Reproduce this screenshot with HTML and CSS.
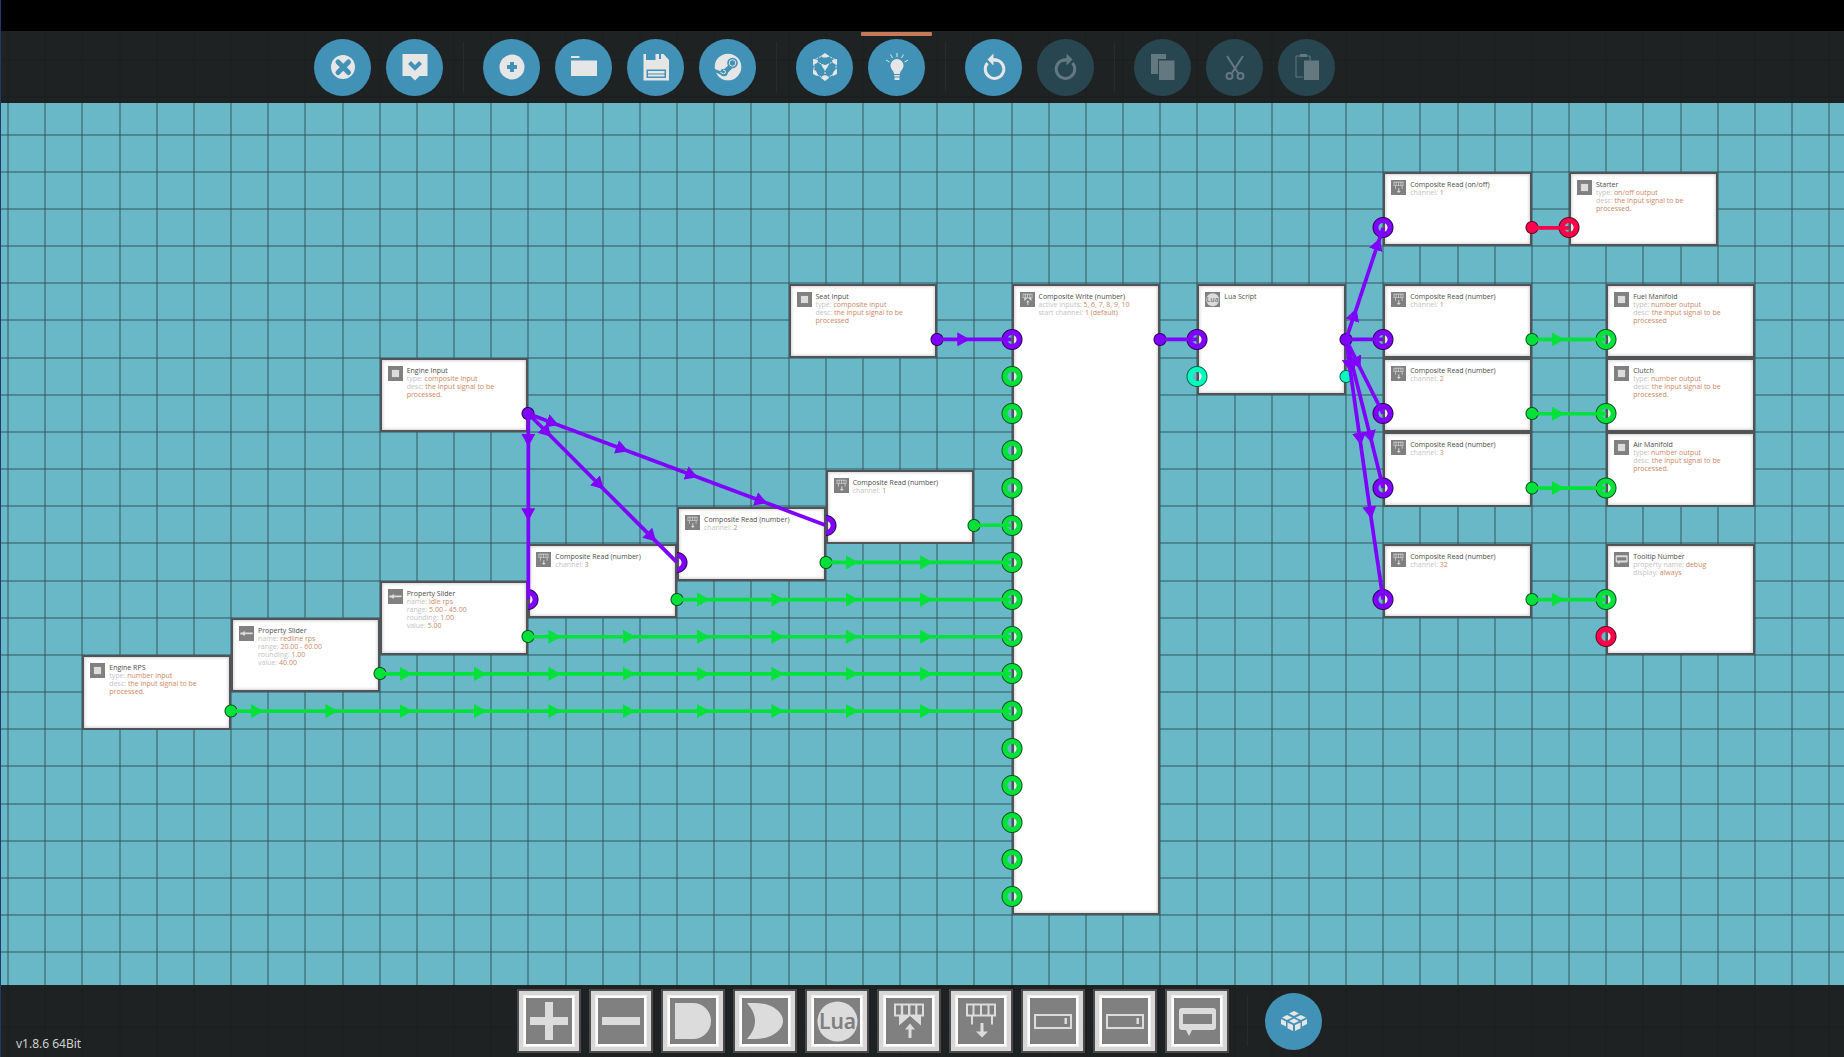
FILE: index.html
```html
<!DOCTYPE html>
<html lang="en">
<head>
<meta charset="utf-8">
<meta name="viewport" content="width=device-width, initial-scale=1">
<title>Microcontroller Editor</title>
<link rel="stylesheet" href="styles.css">
</head>
<body>
<svg class="defs" aria-hidden="true">
  <symbol id="i-add" viewBox="0 0 46 46"><path d="M19 4h8v15h15v8H27v15h-8V27H4v-8h15z"/></symbol>
  <symbol id="i-sub" viewBox="0 0 46 46"><path d="M4 19h38v8H4z"/></symbol>
  <symbol id="i-and" viewBox="0 0 46 46"><path d="M5 5h18a18 18 0 0 1 0 36H5z"/></symbol>
  <symbol id="i-or" viewBox="0 0 46 46"><path d="M5 5h8c17 0 28 9 28 18s-11 18-28 18H5c5-6 8-11 8-18S10 11 5 5z"/></symbol>
  <symbol id="i-lua" viewBox="0 0 46 46"><circle cx="23.500" cy="23.500" r="20"/><text x="23.500" y="31" text-anchor="middle" class="lua-text">Lua</text></symbol>
  <symbol id="i-write" viewBox="0 0 46 46"><path fill-rule="evenodd" d="M8 5.500h30V18.500h-3v9l-11-9.500-11 9.500v-9H8zM10 7.500v9h4.800v-9zM17.200 7.500v9H22v-9zM24.400 7.500v9h4.800v-9zM31.400 7.500v9H36v-9z"/><path d="M24 25.500l5 6h-3.500v8.500h-3v-8.500H19z"/></symbol>
  <symbol id="i-read" viewBox="0 0 46 46"><path fill-rule="evenodd" d="M8 5.500h30V18.500h-3v8h-2v-8H15v8h-2v-8H8zM10 7.500v9h4.500v-9zM16.500 7.500v9H22v-9zM24 7.500v9h5.500v-9zM31.500 7.500v9H36v-9z"/><path d="M24 39.500l-6-6h4.500V25h3v8.500h4.500z"/></symbol>
  <symbol id="i-dial" viewBox="0 0 46 46"><path fill-rule="evenodd" d="M4 16h38v15H4zM6 18v11h34V18z"/><rect x="34.500" y="20" width="2.500" height="6"/></symbol>
  <symbol id="i-tip" viewBox="0 0 46 46"><path fill-rule="evenodd" d="M8 10h31q3 0 3 3v16q0 3-3 3H18l-3 6-3-6H8q-3 0-3-3V13q0-3 3-3zM9 16v10h29V16z"/></symbol>
  <symbol id="i-io" viewBox="0 0 46 46"><path d="M12 12h22v22H12z"/></symbol>
  <symbol id="i-slider" viewBox="0 0 46 46"><path d="M4 20h6l8-5v5h24v5H18v6l-8-5H4z"/></symbol>
</svg>
<div class="app">
  <div class="letterbox"></div>

  <header class="toolbar">
    <button class="round" aria-label="Close"><svg viewBox="0 0 30 30"><circle cx="15" cy="15" r="12"/><path class="cut w5" d="M10 10l10.500 10.500M20.500 10L10 20.500"/></svg></button>
    <button class="round" aria-label="Minimise"><svg viewBox="0 0 30 30"><path d="M2.500 2h25v22h-8L15 28.500 10.500 24h-8z"/><path class="cut w4" d="M9.500 10.500l5.500 5.500 5.500-5.500"/></svg></button>
    <span class="sep"></span>
    <button class="round" aria-label="New"><svg viewBox="0 0 30 30"><circle cx="15" cy="15" r="12.500"/><path class="cut w4" d="M15 10v10M10 15h10"/></svg></button>
    <button class="round" aria-label="Open"><svg viewBox="0 0 30 30"><path d="M2 4h8.500v2H2zM2 8.500h26V24H2z"/></svg></button>
    <button class="round" aria-label="Save"><svg viewBox="0 0 30 30"><path fill-rule="evenodd" d="M2.500 2H5v6h9.500V2H18v5h2V2h2.500L28 8v20.500H2.500zM5.500 17.500V26h19.500v-8.500zM7 19h16.500v2.500H7zM7 22.500h16.500v2H7z"/></svg></button>
    <button class="round" aria-label="Workshop"><svg viewBox="0 0 30 30"><circle cx="15" cy="15" r="13.300"/><path class="cut w3" d="M0 18l9 3.500"/><path class="cut w5" d="M11 21l9-9"/><circle class="hole" cx="19.500" cy="11" r="5.300"/><circle cx="19.500" cy="11" r="3.300" class="ring"/><circle cx="11" cy="20.500" r="3.800" class="hole"/><path class="thin" d="M7.500 20.500l3 1.200q2 .300 2-1.700t-2.500-2"/></svg></button>
    <span class="sep"></span>
    <button class="round" aria-label="Toggle 3D view"><svg viewBox="0 0 30 30"><path class="thin dash" d="M15 2.500L26 8v13l-11 6L4 21V8zM4 8l11 6 11-6M15 14v13"/><path d="M15 1l4 3-2 1.500h-4L11 4zM15 29l-4-3 2-2.500h4l2 2.500zM3 7l5 1-1 3-4 2zM27 7l-5 1 1 3 4 2zM3 22v-5l3 2 2 4-1 1zM27 22v-5l-3 2-2 4 1 1zM11 12l4 1 4-1-2 4-2 2-2-2z"/></svg></button>
    <span class="marked"><button class="round" aria-label="Hints"><svg viewBox="0 0 30 30"><path d="M15 7a6.500 6.500 0 0 1 6.500 6.500c0 4-3.500 5-3.500 8.500h-6c0-3.500-3.500-4.500-3.500-8.500A6.500 6.500 0 0 1 15 7zM12.300 23h5.400v1.500h-5.400zM12.500 25.500h5V28h-5z"/><path class="thin" d="M15 1v4M8.500 2.500l2 3.500M21.500 2.500l-2 3.500M4 8l3.500 2M26 8l-3.500 2"/></svg></button></span>
    <span class="sep"></span>
    <button class="round" aria-label="Undo"><svg viewBox="0 0 30 30"><path class="arc" d="M17.500 8A9.300 9.300 0 1 1 8.500 11"/><path d="M14.500 1.500v4.500l3.500 .500v3.500l-3.500-.500v4L8.500 7.500z"/></svg></button>
    <button class="round" aria-label="Redo" disabled><svg viewBox="0 0 30 30"><path class="arc" d="M12.500 8A9.300 9.300 0 1 0 21.500 11"/><path d="M15.500 1.500v4.500l-3.500 .500v3.500l3.500-.500v4l6-6z"/></svg></button>
    <span class="sep"></span>
    <button class="round" aria-label="Copy" disabled><svg viewBox="0 0 30 30"><path d="M3 2h15v5h-8v15H3zM11 8.500h15.500V28H11z"/></svg></button>
    <button class="round" aria-label="Cut" disabled><svg viewBox="0 0 30 30"><path class="blade" d="M7 4l11 17M23 4L12 21"/><circle class="loop" cx="9.500" cy="24" r="3"/><circle class="loop" cx="20.500" cy="24" r="3"/></svg></button>
    <button class="round" aria-label="Paste" disabled><svg viewBox="0 0 30 30"><path class="thin" d="M10 4H4v21h7M15 4h3v5"/><path d="M8 2h7v3H8zM12 8.500h15V28H12z"/></svg></button>
  </header>

  <main class="canvas">
    <div class="board">
      <article class="node" style="--x:22;--y:9"><svg class="icon"><use href="#i-read"/></svg><div class="info"><h2>Composite Read (number)</h2><p>channel: <b>1</b></p></div><div class="in"><i class="port violet"></i></div><div class="out"><i class="pin green"></i></div></article>
      <article class="node" style="--x:18;--y:10"><svg class="icon"><use href="#i-read"/></svg><div class="info"><h2>Composite Read (number)</h2><p>channel: <b>2</b></p></div><div class="in"><i class="port violet"></i></div><div class="out"><i class="pin green"></i></div></article>
      <article class="node" style="--x:14;--y:11"><svg class="icon"><use href="#i-read"/></svg><div class="info"><h2>Composite Read (number)</h2><p>channel: <b>3</b></p></div><div class="in"><i class="port violet"></i></div><div class="out"><i class="pin green"></i></div></article>
      <article class="node" style="--x:10;--y:12"><svg class="icon"><use href="#i-slider"/></svg><div class="info"><h2>Property Slider</h2><p>name: <b>idle rps</b></p><p>range: <b>5.00 - 45.00</b></p><p>rounding: <b>1.00</b></p><p>value: <b>5.00</b></p></div><div class="out"><i class="pin green"></i></div></article>
      <article class="node" style="--x:6;--y:13"><svg class="icon"><use href="#i-slider"/></svg><div class="info"><h2>Property Slider</h2><p>name: <b>redline rps</b></p><p>range: <b>20.00 - 60.00</b></p><p>rounding: <b>1.00</b></p><p>value: <b>40.00</b></p></div><div class="out"><i class="pin green"></i></div></article>
      <article class="node" style="--x:2;--y:14"><svg class="icon"><use href="#i-io"/></svg><div class="info"><h2>Engine RPS</h2><p>type: <b>number input</b></p><p>desc: <b>the input signal to be processed.</b></p></div><div class="out"><i class="pin green"></i></div></article>
      <article class="node" style="--x:10;--y:6"><svg class="icon"><use href="#i-io"/></svg><div class="info"><h2>Engine Input</h2><p>type: <b>composite input</b></p><p>desc: <b>the input signal to be processed.</b></p></div><div class="out"><i class="pin violet"></i></div></article>
      <article class="node" style="--x:21;--y:4"><svg class="icon"><use href="#i-io"/></svg><div class="info"><h2>Seat Input</h2><p>type: <b>composite input</b></p><p>desc: <b>the input signal to be processed</b></p></div><div class="out"><i class="pin violet"></i></div></article>
      <article class="node" style="--x:27;--y:4;--h:17"><svg class="icon"><use href="#i-write"/></svg><div class="info"><h2>Composite Write (number)</h2><p>active inputs: <b>5, 6, 7, 8, 9, 10</b></p><p>start channel: <b>1 (default)</b></p></div>
        <div class="in"><i class="port violet"></i><i class="port green"></i><i class="port green"></i><i class="port green"></i><i class="port green"></i><i class="port green"></i><i class="port green"></i><i class="port green"></i><i class="port green"></i><i class="port green"></i><i class="port green"></i><i class="port green"></i><i class="port green"></i><i class="port green"></i><i class="port green"></i><i class="port green"></i></div>
        <div class="out"><i class="pin violet"></i></div></article>
      <article class="node" style="--x:32;--y:4;--h:3"><svg class="icon"><use href="#i-lua"/></svg><div class="info"><h2>Lua Script</h2></div><div class="in"><i class="port violet"></i><i class="port teal"></i></div><div class="out"><i class="pin violet"></i><i class="pin teal"></i></div></article>
      <article class="node" style="--x:37;--y:1"><svg class="icon"><use href="#i-read"/></svg><div class="info"><h2>Composite Read (on/off)</h2><p>channel: <b>1</b></p></div><div class="in"><i class="port violet"></i></div><div class="out"><i class="pin red"></i></div></article>
      <article class="node" style="--x:37;--y:4"><svg class="icon"><use href="#i-read"/></svg><div class="info"><h2>Composite Read (number)</h2><p>channel: <b>1</b></p></div><div class="in"><i class="port violet"></i></div><div class="out"><i class="pin green"></i></div></article>
      <article class="node" style="--x:37;--y:6"><svg class="icon"><use href="#i-read"/></svg><div class="info"><h2>Composite Read (number)</h2><p>channel: <b>2</b></p></div><div class="in"><i class="port violet"></i></div><div class="out"><i class="pin green"></i></div></article>
      <article class="node" style="--x:37;--y:8"><svg class="icon"><use href="#i-read"/></svg><div class="info"><h2>Composite Read (number)</h2><p>channel: <b>3</b></p></div><div class="in"><i class="port violet"></i></div><div class="out"><i class="pin green"></i></div></article>
      <article class="node" style="--x:37;--y:11"><svg class="icon"><use href="#i-read"/></svg><div class="info"><h2>Composite Read (number)</h2><p>channel: <b>32</b></p></div><div class="in"><i class="port violet"></i></div><div class="out"><i class="pin green"></i></div></article>
      <article class="node" style="--x:42;--y:1"><svg class="icon"><use href="#i-io"/></svg><div class="info"><h2>Starter</h2><p>type: <b>on/off output</b></p><p>desc: <b>the input signal to be processed.</b></p></div><div class="in"><i class="port red"></i></div></article>
      <article class="node" style="--x:43;--y:4"><svg class="icon"><use href="#i-io"/></svg><div class="info"><h2>Fuel Manifold</h2><p>type: <b>number output</b></p><p>desc: <b>the input signal to be processed</b></p></div><div class="in"><i class="port green"></i></div></article>
      <article class="node" style="--x:43;--y:6"><svg class="icon"><use href="#i-io"/></svg><div class="info"><h2>Clutch</h2><p>type: <b>number output</b></p><p>desc: <b>the input signal to be processed.</b></p></div><div class="in"><i class="port green"></i></div></article>
      <article class="node" style="--x:43;--y:8"><svg class="icon"><use href="#i-io"/></svg><div class="info"><h2>Air Manifold</h2><p>type: <b>number output</b></p><p>desc: <b>the input signal to be processed.</b></p></div><div class="in"><i class="port green"></i></div></article>
      <article class="node" style="--x:43;--y:11;--h:3"><svg class="icon"><use href="#i-tip"/></svg><div class="info"><h2>Tooltip Number</h2><p>property name: <b>debug</b></p><p>display: <b>always</b></p></div><div class="in"><i class="port green"></i><i class="port red"></i></div></article>

      <svg class="wires" viewBox="0 0 4600 2200" aria-hidden="true">
        <defs>
          <marker id="a-green" class="f-green" markerUnits="userSpaceOnUse" markerWidth="34" markerHeight="38" refX="34" refY="19" orient="auto"><path d="M0 0l34 19L0 38z"/></marker>
          <marker id="a-violet" class="f-violet" markerUnits="userSpaceOnUse" markerWidth="34" markerHeight="38" refX="34" refY="19" orient="auto"><path d="M0 0l34 19L0 38z"/></marker>
        </defs>
        <g class="w-green">
          <path d="M600 1550h88h200h200h200h200h200h200h200h200h200H2700"/>
          <path d="M1000 1450h88h200h200h200h200h200h200h200H2700"/>
          <path d="M1400 1350h88h200h200h200h200h200H2700"/>
          <path d="M1800 1250h88h200h200h200H2700"/>
          <path d="M2200 1150h88h200H2700"/>
          <path d="M2600 1050h100"/>
          <path d="M4100 550h88h112"/>
          <path d="M4100 750h88h112"/>
          <path d="M4100 950h88h112"/>
          <path d="M4100 1250h88h112"/>
        </g>
        <g class="w-violet">
          <path d="M1400 750l82 31l187 70l187 70l187 70L2200 1050"/>
          <path d="M1400 750l62 62l141 141l141 141L1800 1150"/>
          <path d="M1400 750v88v200V1250"/>
          <path d="M2500 550h88H2700"/>
          <path d="M3100 550h100"/>
          <path d="M3600 550l28-83l63-190L3700 250"/>
          <path d="M3600 550h100"/>
          <path d="M3600 550l39 79L3700 750"/>
          <path d="M3600 550l21 85l49 194L3700 950"/>
          <path d="M3600 550l12 87l28 198l28 198L3700 1250"/>
        </g>
        <path class="w-red" d="M4100 250h100"/>
      </svg>
    </div>
  </main>

  <footer class="dock">
    <span class="version">v1.8.6 64Bit</span>
    <div class="palette">
      <button class="tile" aria-label="Add"><svg><use href="#i-add"/></svg></button>
      <button class="tile" aria-label="Subtract"><svg><use href="#i-sub"/></svg></button>
      <button class="tile" aria-label="AND gate"><svg><use href="#i-and"/></svg></button>
      <button class="tile" aria-label="OR gate"><svg><use href="#i-or"/></svg></button>
      <button class="tile" aria-label="Lua script"><svg><use href="#i-lua"/></svg></button>
      <button class="tile" aria-label="Composite write"><svg><use href="#i-write"/></svg></button>
      <button class="tile" aria-label="Composite read"><svg><use href="#i-read"/></svg></button>
      <button class="tile" aria-label="Number property"><svg><use href="#i-dial"/></svg></button>
      <button class="tile" aria-label="Text property"><svg><use href="#i-dial"/></svg></button>
      <button class="tile" aria-label="Tooltip"><svg><use href="#i-tip"/></svg></button>
      <span class="sep"></span>
      <button class="round" aria-label="All components"><svg viewBox="0 0 30 30"><path d="M15 5l5 2.500-5 2.500-5-2.500zM8 9l5.500 2.500-5.500 2.500-5-2.500zM22 9l5 2.500-5 2.500-5.500-2.500zM15 12.500l5 2.500-5 2.500-5-2.500zM2 13l5 2.500v5L2 18zM8.500 16.500l5.500 2.500v6l-5.500-2.700zM16 19l5.500-2.500v5.800L16 25zM23 15.500l5-2.500v5l-5 2.500z"/></svg></button>
    </div>
  </footer>
</div>
</body>
</html>
```
FILE: styles.css
```css
:root {
  --cell: calc(223px / 6);
  --blue: #4291b6;
  --bar: rgba(27, 28, 27, 0.96);
}

* { box-sizing: border-box; }

body {
  margin: 0;
  background: #000;
  font-family: "Open Sans", "Noto Sans", sans-serif;
}

.defs { display: none; }

/* Six cells span 223px, so one background tile holds six rules each way. */
.app {
  --rule: rgba(45, 76, 84, 0.45);
  display: grid;
  grid-template-rows: 31px 72px 1fr 72px;
  min-height: 100vh;
  overflow: hidden;
  border-left: 1px solid #1f3a6b;
  background-color: #69b8c7;
  background-image:
    linear-gradient(90deg, var(--rule) 2px, transparent 2px 37px, var(--rule) 37px 39px, transparent 39px 74px, var(--rule) 74px 76px, transparent 76px 112px, var(--rule) 112px 114px, transparent 114px 149px, var(--rule) 149px 151px, transparent 151px 186px, var(--rule) 186px 188px, transparent 188px),
    linear-gradient(var(--rule) 2px, transparent 2px 37px, var(--rule) 37px 39px, transparent 39px 74px, var(--rule) 74px 76px, transparent 76px 112px, var(--rule) 112px 114px, transparent 114px 149px, var(--rule) 149px 151px, transparent 151px 186px, var(--rule) 186px 188px, transparent 188px);
  background-size: 223px 223px;
  background-position: 6px 22px;
}

.letterbox { background: #000; }

button { padding: 0; border: 0; font: inherit; cursor: pointer; }
button:disabled { cursor: default; }

/* Toolbar */
.toolbar {
  display: flex;
  align-items: center;
  justify-content: center;
  gap: 15px;
  padding-right: 196px;
  background: var(--bar);
}

.round {
  --face: var(--blue);
  --glyph: #e6e6e6;
  display: grid;
  place-items: center;
  flex: none;
  width: 57px;
  height: 57px;
  border-radius: 50%;
  background: var(--face);
}
.round:disabled { --face: #28464f; --glyph: #64797f; }
.round svg { width: 30px; height: 30px; fill: var(--glyph); }
.round .cut { fill: none; stroke: var(--face); }
.round .hole { fill: var(--face); }
.round .ring { fill: none; stroke: var(--glyph); stroke-width: 1px; }
.round .thin { fill: none; stroke: var(--glyph); stroke-width: 1px; }
.round .dash { stroke-dasharray: 2 1; }
.round .arc { fill: none; stroke: var(--glyph); stroke-width: 3px; }
.round .blade { fill: none; stroke: var(--glyph); stroke-width: 2px; }
.round .loop { fill: none; stroke: var(--glyph); stroke-width: 2px; }
.w3 { stroke-width: 3px; }
.w4 { stroke-width: 4px; }
.w5 { stroke-width: 5px; stroke-linecap: round; }

.sep {
  flex: none;
  width: 10px;
  height: 50px;
  background: linear-gradient(#2c2b2b, #2c2b2b) center / 1px 100% no-repeat;
}

.marked { position: relative; }
.marked::before {
  content: "";
  position: absolute;
  top: -7px;
  left: -7px;
  right: -7px;
  height: 4px;
  border-radius: 1px;
  background: #c47a58;
}

/* Node canvas */
.canvas { min-width: 0; }

.board {
  position: relative;
  width: calc(var(--cell) * 46);
  height: calc(var(--cell) * 22);
  margin: 32px 0 0 7px;
}

.node {
  --h: 2;
  position: absolute;
  left: calc(var(--cell) * var(--x));
  top: calc(var(--cell) * var(--y));
  display: flex;
  align-items: flex-start;
  gap: 4px;
  width: calc(var(--cell) * 4);
  height: calc(var(--cell) * var(--h));
  padding: 6px 8px 0 6px;
  border: 2px solid #4f5456;
  background: #fff;
  box-shadow: inset 0 0 3px 1px #d8d2d2;
}

.icon { flex: none; width: 15px; height: 15px; background: #808080; fill: #dcdcdc; }

.info { flex: 1; min-width: 0; padding-top: 1px; }
.info h2, .info p { margin: 0; font-weight: 400; }
.info h2 { font-size: 7px; line-height: 8px; color: #4c4c4c; }
.info p { font-size: 7px; line-height: 8px; color: #c4c4c4; }
.info b { font-weight: 400; color: #cc8866; }

.in, .out {
  position: absolute;
  top: calc(var(--cell) - 2px);
  display: flex;
  flex-direction: column;
}
.in { left: -13px; }
.out { right: -9px; }

.violet { --c: #7f00ff; --edge: #2b0358; }
.green { --c: #00e23a; --edge: #06521c; }
.teal { --c: #00ffbe; --edge: #05604a; }
.red { --c: #ff004c; --edge: #5e0620; }

.port {
  width: 22px;
  height: var(--cell);
  background: radial-gradient(circle, transparent 4px, var(--c) 5px 9px, var(--edge) 10px, transparent 11px);
}
.pin {
  width: 14px;
  height: var(--cell);
  background: radial-gradient(circle, var(--c) 5px, var(--edge) 6px, transparent 7px);
}

.wires {
  position: absolute;
  inset: 0;
  width: 100%;
  height: 100%;
  fill: none;
  stroke-width: 10;
  pointer-events: none;
}
.w-green { stroke: #00e23a; }
.w-violet { stroke: #7f00ff; }
.w-red { stroke: #ff004c; }
.w-green path { marker-mid: url(#a-green); }
.w-violet path { marker-mid: url(#a-violet); }
.f-green { fill: #00e23a; stroke: none; }
.f-violet { fill: #7f00ff; stroke: none; }
.wires marker path { marker: none; }

/* Bottom dock */
.dock {
  display: grid;
  grid-template-columns: 1fr auto 1fr;
  align-items: center;
  padding: 0 16px 0 15px;
  background: var(--bar);
}
.version {
  align-self: end;
  padding-bottom: 4px;
  font: 12px/18px "Noto Sans", "Open Sans", sans-serif;
  color: #cfcfcf;
}
.palette { display: flex; align-items: center; gap: 8px; padding-right: 5px; }
.palette .sep { width: 20px; }

.tile {
  width: 64px;
  height: 64px;
  padding: 3px;
  border: 2px solid #4b4b4b;
  background: #fff;
  box-shadow: inset 0 0 0 4px #d9d6d6, inset 0 0 0 5px #eee;
  display: grid;
  place-items: center;
}
.tile svg { width: 46px; height: 46px; background: #808080; fill: #dcdcdc; }
.lua-text { font: 600 21px "Noto Sans", sans-serif; fill: #808080; }
```
